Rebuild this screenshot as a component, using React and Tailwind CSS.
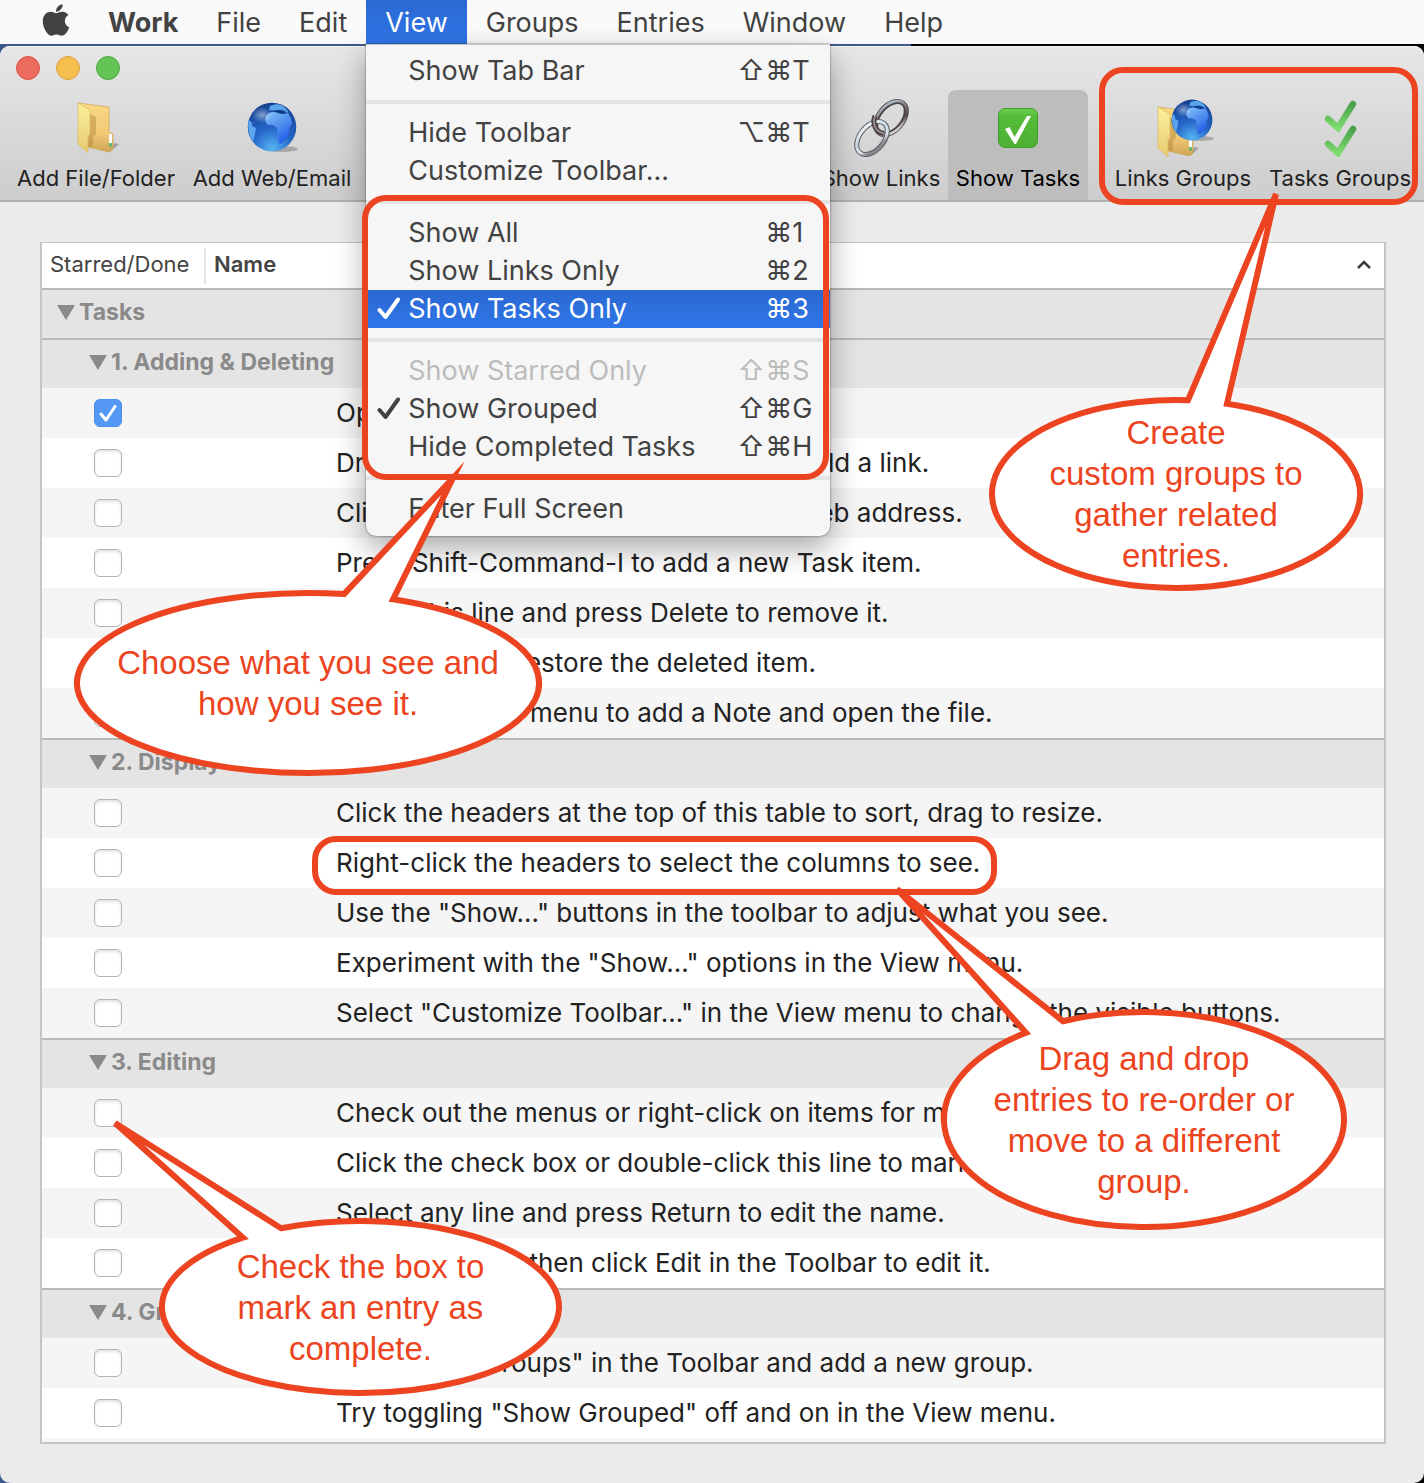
import React from "react";
import { FaApple } from "react-icons/fa";

const MENUS_LEFT = ["File", "Edit"];
const MENUS_RIGHT = ["Groups", "Entries", "Window", "Help"];

const VIEW_MENU = [
  [{ label: "Show Tab Bar", mods: "⇧⌘", k: "T" }],
  [
    { label: "Hide Toolbar", mods: "⌥⌘", k: "T" },
    { label: "Customize Toolbar..." },
  ],
  [
    { label: "Show All", mods: "⌘", k: "1" },
    { label: "Show Links Only", mods: "⌘", k: "2" },
    { label: "Show Tasks Only", mods: "⌘", k: "3", checked: true, active: true },
  ],
  [
    { label: "Show Starred Only", mods: "⇧⌘", k: "S", disabled: true },
    { label: "Show Grouped", mods: "⇧⌘", k: "G", checked: true },
    { label: "Hide Completed Tasks", mods: "⇧⌘", k: "H" },
  ],
  [{ label: "Enter Full Screen" }],
];

const GROUPS = [
  {
    title: "1. Adding & Deleting",
    items: [
      { text: "Open the View menu", done: true },
      { text: "Drag a file or folder on this window to add a link." },
      { text: "Click Add Web/Email and then type a web address." },
      { text: "Press Shift-Command-I to add a new Task item." },
      { text: "Select this line and press Delete to remove it." },
      { text: "Press Undo to restore the deleted item." },
      { text: "Use the Entries menu to add a Note and open the file." },
    ],
  },
  {
    title: "2. Display",
    items: [
      { text: "Click the headers at the top of this table to sort, drag to resize." },
      { text: "Right-click the headers to select the columns to see." },
      { text: 'Use the "Show..." buttons in the toolbar to adjust what you see.' },
      { text: 'Experiment with the "Show..." options in the View menu.' },
      { text: 'Select "Customize Toolbar..." in the View menu to change the visible buttons.' },
    ],
  },
  {
    title: "3. Editing",
    items: [
      { text: "Check out the menus or right-click on items for more" },
      { text: "Click the check box or double-click this line to mark" },
      { text: "Select any line and press Return to edit the name." },
      { text: "Select any line, then click Edit in the Toolbar to edit it." },
    ],
  },
  {
    title: "4. Grouping",
    items: [
      { text: 'Use "Tasks Groups" in the Toolbar and add a new group.' },
      { text: 'Try toggling "Show Grouped" off and on in the View menu.' },
    ],
  },
];

function CheckMark({ className }) {
  return (
    <svg viewBox="0 0 24 24" className={className} fill="none" stroke="currentColor" aria-hidden="true">
      <path d="M2.5 13 L8.5 20 L21 2.500" strokeWidth="4" strokeLinejoin="round" strokeLinecap="round" />
    </svg>
  );
}

function ViewMenu() {
  return (
    <div
      role="menu"
      className="absolute left-0 top-11 w-[464px] rounded-b-[10px] border-t border-[#c4c4c4] bg-[#f6f6f6] pb-2 pt-[7px] shadow-[0_0_2px_rgba(0,0,0,0.6),0_12px_30px_rgba(0,0,0,0.35)]"
    >
      {VIEW_MENU.map((section, i) => (
        <React.Fragment key={i}>
          {i > 0 && <div role="separator" className="my-[10px] h-1 bg-[#e4e4e4]" />}
          {section.map((it) => (
            <button
              key={it.label}
              type="button"
              role="menuitem"
              disabled={it.disabled}
              className={
                "flex h-[38px] w-full items-center text-[27px] " +
                (it.active
                  ? "bg-linear-to-b from-[#2a68d1] to-[#2f76e9] text-white"
                  : it.disabled
                    ? "text-[#bcbcbc]"
                    : "text-[#424242]")
              }
            >
              <span className="flex w-[42px] justify-center pl-1">
                {it.checked && <CheckMark className="size-6" />}
              </span>
              <span className="flex-1 text-left">{it.label}</span>
              {it.k && (
                <>
                  <span>{it.mods}</span>
                  <span className="w-[38px] text-left">{it.k}</span>
                </>
              )}
            </button>
          ))}
        </React.Fragment>
      ))}
    </div>
  );
}

function MenuBar() {
  const item = "flex h-11 items-center px-[19px] pt-0.5";
  return (
    <nav className="relative z-20 flex h-11 bg-[#fafafa] pl-[22px] text-[27px] text-[#424242]">
      <button type="button" aria-label="Apple" className="flex h-11 w-[67px] items-center justify-center pb-1">
        <FaApple className="size-9" />
      </button>
      <button type="button" className={item + " font-bold"}>Work</button>
      {MENUS_LEFT.map((m) => (
        <button key={m} type="button" className={item}>{m}</button>
      ))}
      <div className="relative">
        <button type="button" className={item + " bg-linear-to-b from-[#2a68d1] to-[#2f76e9] text-white"}>
          View
        </button>
        <ViewMenu />
      </div>
      {MENUS_RIGHT.map((m) => (
        <button key={m} type="button" className={item}>{m}</button>
      ))}
    </nav>
  );
}

function FolderArt() {
  return (
    <g>
      <path d="M36 51 L45 43 L40 42 Z" fill="#000" opacity="0.25" />
      <path d="M4 2 L35 6 V31 L39 33 V48 L35 51 L14 46 Z" fill="url(#folderBack)" stroke="#c9a04a" strokeWidth="0.6" />
      <path d="M35 33 h3 v12 h-3 z" fill="#fff" />
      <path d="M35 42 h3 v4 h-3 z" fill="#6cb86c" />
      <path d="M16 13 L22 16 V33 L19 36 V46 L14 45 Z" fill="#a87f2d" opacity="0.4" />
      <path d="M4 2 L16 9 V33 L14 35 V52 L4 43 Z" fill="url(#folderFront)" stroke="#d8b458" strokeWidth="0.6" />
    </g>
  );
}

function GlobeArt() {
  return (
    <g>
      <ellipse cx="34" cy="47" rx="17" ry="3" fill="#000" opacity="0.22" />
      <circle cx="25" cy="25" r="24.3" fill="url(#globeSea)" />
      <path d="M23 4 Q29 1 34 3 Q38 5 40 8 Q42 10 41 11 Q36 7 32 8 Q27 9 22 8 Z" fill="#5aa5ee" />
      <path d="M27 8 L36 9 L38 12 L30 11 Z" fill="#123a80" />
      <path d="M22 11 Q26 9 31 11 Q36 13 41 11 Q44 15 45 21 L42 27 Q42 35 37 39 Q34 43 32 41 Q30 34 30 27 Q28 22 21 23 Q17 20 19 14 Z" fill="url(#globeLand)" />
      <path d="M1.500 18 Q6 20 5 24 L9 26 Q8 33 6 40 Q0 31 1.500 18 Z" fill="#5aa5ee" />
      <ellipse cx="15" cy="13" rx="10" ry="8" fill="url(#globeShine)" />
    </g>
  );
}

function SharedDefs() {
  return (
    <svg className="absolute size-0" aria-hidden="true">
      <defs>
        <linearGradient id="folderBack" x1="0" y1="0" x2="0" y2="1">
          <stop offset="0" stopColor="#f8d883" />
          <stop offset="0.6" stopColor="#f2ca76" />
          <stop offset="1" stopColor="#cfa656" />
        </linearGradient>
        <linearGradient id="folderFront" x1="0" y1="0" x2="0" y2="1">
          <stop offset="0" stopColor="#fbf09a" />
          <stop offset="1" stopColor="#e6cb74" />
        </linearGradient>
        <radialGradient id="globeSea" cx="0.5" cy="0.95" r="0.95">
          <stop offset="0" stopColor="#56b4f4" />
          <stop offset="0.45" stopColor="#2566c8" />
          <stop offset="1" stopColor="#16418f" />
        </radialGradient>
        <linearGradient id="globeLand" x1="0" y1="0" x2="0.6" y2="1">
          <stop offset="0" stopColor="#83c3f8" />
          <stop offset="1" stopColor="#2460e8" />
        </linearGradient>
        <radialGradient id="globeShine">
          <stop offset="0" stopColor="#fff" stopOpacity="0.45" />
          <stop offset="1" stopColor="#fff" stopOpacity="0" />
        </radialGradient>
        <linearGradient id="steel" x1="0" y1="0" x2="1" y2="0.4">
          <stop offset="0" stopColor="#ffffff" />
          <stop offset="0.5" stopColor="#c3d3e2" />
          <stop offset="0.8" stopColor="#e3e6ea" />
          <stop offset="1" stopColor="#8a8588" />
        </linearGradient>
        <linearGradient id="steelDark" x1="0" y1="0" x2="1" y2="0.6">
          <stop offset="0" stopColor="#b9d2ea" />
          <stop offset="0.4" stopColor="#8d8488" />
          <stop offset="0.75" stopColor="#4c4144" />
          <stop offset="1" stopColor="#d5d1d3" />
        </linearGradient>
        <linearGradient id="greenBox" x1="0" y1="0" x2="0" y2="1">
          <stop offset="0" stopColor="#6ccf4e" />
          <stop offset="0.2" stopColor="#55bd39" />
          <stop offset="1" stopColor="#4faf33" />
        </linearGradient>
        <linearGradient id="greenTick" x1="0" y1="0" x2="0" y2="1">
          <stop offset="0" stopColor="#4aa14a" />
          <stop offset="1" stopColor="#7fdc70" />
        </linearGradient>
      </defs>
    </svg>
  );
}

const FolderIcon = () => (
  <svg width="44" height="54" viewBox="0 0 44 54" className="overflow-visible" aria-hidden="true"><FolderArt /></svg>
);
const GlobeIcon = () => (
  <svg width="50" height="52" viewBox="0 0 50 52" className="overflow-visible" aria-hidden="true"><GlobeArt /></svg>
);
const ChainIcon = () => (
  <svg width="58" height="58" viewBox="0 0 58 58" className="overflow-visible" aria-hidden="true">
    <g fill="none">
      <g transform="rotate(40 39 19)">
        <ellipse cx="39" cy="19" rx="12" ry="19" stroke="#4a4245" strokeWidth="5" />
        <ellipse cx="39" cy="19" rx="12.500" ry="19.500" stroke="url(#steelDark)" strokeWidth="2.500" />
      </g>
      <g transform="rotate(40 20 39)">
        <ellipse cx="20" cy="39" rx="12" ry="19" stroke="#596069" strokeWidth="5" />
        <ellipse cx="20" cy="39" rx="12" ry="19" stroke="url(#steel)" strokeWidth="3" />
      </g>
      <path d="M23 17 Q20 25 25 31 Q28 34 32 34.500" stroke="#4a3a3e" strokeWidth="5" />
      <path d="M23 17 Q20 25 25 31 Q28 34 32 34.500" stroke="#958d92" strokeWidth="2" />
    </g>
  </svg>
);
const TaskIcon = () => (
  <svg width="40" height="40" viewBox="0 0 40 40" aria-hidden="true">
    <rect x="0.5" y="0.5" width="39" height="39" rx="6.500" fill="url(#greenBox)" stroke="#3f9e2b" />
    <path d="M7 21 L11.500 19 L16.500 29 L29 8 L33 8 L18 36 H16.500 Z" fill="#fff" />
  </svg>
);
const LinksGroupsIcon = () => (
  <svg width="58" height="58" viewBox="0 0 58 58" className="overflow-visible" aria-hidden="true">
    <g transform="translate(0 6)"><FolderArt /></g>
    <g transform="translate(17 0) scale(0.84)"><GlobeArt /></g>
  </svg>
);
const TasksGroupsIcon = () => (
  <svg width="34" height="58" viewBox="0 0 34 58" fill="none" aria-hidden="true">
    <path d="M5 20 L15 29 L30 5" stroke="url(#greenTick)" strokeWidth="6.500" strokeLinecap="round" />
    <path d="M5 45 L15 54 L30 30" stroke="url(#greenTick)" strokeWidth="6.500" strokeLinecap="round" />
  </svg>
);

function ToolButton({ label, icon, width, active }) {
  return (
    <button
      type="button"
      className={
        "flex h-[110px] shrink-0 flex-col items-center whitespace-nowrap text-[22px] leading-8 " +
        width +
        (active ? " rounded-t-lg bg-[#bdbdbd] text-black" : " text-[#222]")
      }
    >
      <span className="flex h-[72px] items-center justify-center pt-1">{icon}</span>
      <span>{label}</span>
    </button>
  );
}

function Toolbar() {
  return (
    <header className="rounded-t-[10px] border-b-2 border-[#b1b1b1] bg-linear-to-b from-[#e7e7e7] to-[#cdcdcd] shadow-[inset_0_1px_0_#f4f4f4]">
      <div className="flex h-11 items-center gap-4 pl-4">
        <button type="button" aria-label="Close" className="size-6 rounded-full border border-[#d75548] bg-[#ed6b5f]" />
        <button type="button" aria-label="Minimize" className="size-6 rounded-full border border-[#dba03c] bg-[#f5bf4f]" />
        <button type="button" aria-label="Zoom" className="size-6 rounded-full border border-[#4fa73f] bg-[#62c554]" />
      </div>
      <div className="flex justify-between pl-2 pr-1">
        <div className="flex">
          <ToolButton label="Add File/Folder" icon={<FolderIcon />} width="w-[176px]" />
          <ToolButton label="Add Web/Email" icon={<GlobeIcon />} width="w-[176px]" />
        </div>
        <div className="flex">
          <ToolButton label="Show Links" icon={<ChainIcon />} width="w-[134px]" />
          <ToolButton label="Show Tasks" icon={<TaskIcon />} width="w-[140px]" active />
          <div className="w-[18px]" />
          <ToolButton label="Links Groups" icon={<LinksGroupsIcon />} width="w-[154px]" />
          <ToolButton label="Tasks Groups" icon={<TasksGroupsIcon />} width="w-[160px]" />
        </div>
      </div>
    </header>
  );
}

function Disclosure() {
  return (
    <svg width="18" height="15" viewBox="0 0 18 15" className="mr-1" aria-hidden="true">
      <path d="M0 0 H18 L9 15 Z" fill="#8a8a8a" />
    </svg>
  );
}

function GroupRow({ title, indent }) {
  return (
    <tr className="h-[50px] bg-[#e4e4e4] shadow-[inset_0_2px_0_#b9b9b9]">
      <th colSpan={2} scope="colgroup" className={"pt-0 pb-0.5 text-left text-[23px] font-bold text-[#8a8a8a] " + indent}>
        <button type="button" className="flex items-center">
          <Disclosure />
          {title}
        </button>
      </th>
    </tr>
  );
}

function TaskTable() {
  return (
    <div className="ml-10 mr-[38px] border-2 border-t border-[#c5c5c5] bg-[#f5f5f5] pb-1">
      <table className="w-full table-fixed border-collapse">
        <thead>
          <tr className="h-[45px] bg-white text-left text-[22px] text-[#444]">
            <th scope="col" className="w-[164px] p-0 font-normal">
              <div className="flex h-[36px] items-center border-r-2 border-[#e2e2e2] pb-0.5 pl-2">Starred/Done</div>
            </th>
            <th scope="col" className="p-0 font-semibold">
              <div className="flex items-center justify-between pb-0.5 pl-2 pr-[13px]">
                Name
                <svg width="14" height="9" viewBox="0 0 14 9" fill="none" aria-hidden="true">
                  <path d="M1 8 L7 2 L13 8" stroke="#3c3c3c" strokeWidth="2.500" />
                </svg>
              </div>
            </th>
          </tr>
        </thead>
        <tbody className="text-[#222]">
          <GroupRow title="Tasks" indent="pl-[15px]" />
          {GROUPS.map((g, gi) => (
            <React.Fragment key={g.title}>
              <GroupRow title={g.title} indent="pl-[47px]" />
              {g.items.map((it, i) => {
                const id = "task-" + gi + "-" + i;
                return (
                  <tr key={id} className={"h-[50px] " + (i % 2 ? "bg-white" : "bg-[#f5f5f5]")}>
                    <td className="p-0 pl-[52px]">
                      <span className="relative block size-7">
                        <input
                          id={id}
                          type="checkbox"
                          defaultChecked={!!it.done}
                          className="peer block size-7 appearance-none rounded-[6px] border border-[#b4b4b4] bg-white shadow-[inset_0_2px_3px_#e4e4e4] checked:border-[#4a90ee] checked:bg-[#5599f5] checked:shadow-none"
                        />
                        <svg
                          viewBox="0 0 28 28"
                          className="pointer-events-none absolute inset-0 hidden peer-checked:block"
                          fill="none"
                          aria-hidden="true"
                        >
                          <path d="M7 15 L12 21 L21 7.500" stroke="#fff" strokeWidth="3" strokeLinecap="round" strokeLinejoin="round" />
                        </svg>
                      </span>
                    </td>
                    <td className="whitespace-nowrap p-0 pl-[130px] text-[26px] leading-10">
                      <label htmlFor={id}>{it.text}</label>
                    </td>
                  </tr>
                );
              })}
            </React.Fragment>
          ))}
        </tbody>
      </table>
    </div>
  );
}

/* Speech bubble: an ellipse filling its box, with a tail between x = from and x = to on its upper edge. */
function Callout({ box, w, h, from, to, tip, lines }) {
  const rx = w / 2;
  const ry = h / 2;
  const edge = (x) => ry - ry * Math.sqrt(1 - ((x - rx) / rx) ** 2);
  const d = `M${tip[0]} ${tip[1]} L${to} ${edge(to)} A${rx} ${ry} 0 1 1 ${from} ${edge(from)} Z`;
  return (
    <div className={"absolute flex items-center justify-center " + box}>
      <svg width={w} height={h} className="absolute inset-0 overflow-visible" aria-hidden="true">
        <path d={d} fill="#fff" stroke="#ec4420" strokeWidth="6" strokeMiterlimit="10" />
      </svg>
      <p className="relative text-center text-[33px] leading-[41px] whitespace-nowrap text-[#ec4420]">
        {lines.map((l) => (
          <span key={l} className="block">{l}</span>
        ))}
      </p>
    </div>
  );
}

function Annotations() {
  const ring = "absolute rounded-3xl border-6 border-[#ec4420] ";
  return (
    <div className="pointer-events-none absolute inset-0 z-30 overflow-hidden font-['Liberation_Sans',sans-serif]">
      <div className={ring + "left-[1099px] top-[67px] h-[138px] w-[319px]"} />
      <div className={ring + "left-[362px] top-[195px] h-[285px] w-[467px]"} />
      <div className={ring + "left-[312px] top-[836px] h-[59px] w-[685px]"} />
      <Callout
        box="left-[77px] top-[593px] h-[180px] w-[462px]"
        w={462} h={180} from={267} to={316} tip={[376, -115]}
        lines={["Choose what you see and", "how you see it."]}
      />
      <Callout
        box="left-[992px] top-[400px] h-[188px] w-[368px]"
        w={368} h={188} from={196} to={235} tip={[284, -206]}
        lines={["Create", "custom groups to", "gather related", "entries."]}
      />
      <Callout
        box="left-[944px] top-[1012px] h-[215px] w-[400px]"
        w={400} h={215} from={82} to={119} tip={[-47, -123]}
        lines={["Drag and drop", "entries to re-order or", "move to a different", "group."]}
      />
      <Callout
        box="left-[162px] top-[1221px] h-[172px] w-[397px]"
        w={397} h={172} from={81} to={119} tip={[-47, -98]}
        lines={["Check the box to", "mark an entry as", "complete."]}
      />
    </div>
  );
}

export default function App() {
  return (
    <div className="relative flex min-h-screen flex-col overflow-hidden bg-[linear-gradient(to_right,#3f5a8a_64%,#000_64%)] font-['Inter',sans-serif]">
      <SharedDefs />
      <MenuBar />
      <main className="mt-[2px] flex flex-1 flex-col rounded-[10px] bg-[#ebebeb]">
        <Toolbar />
        <div className="flex-1 pt-10 pb-[39px]">
          <TaskTable />
        </div>
      </main>
      <Annotations />
    </div>
  );
}
